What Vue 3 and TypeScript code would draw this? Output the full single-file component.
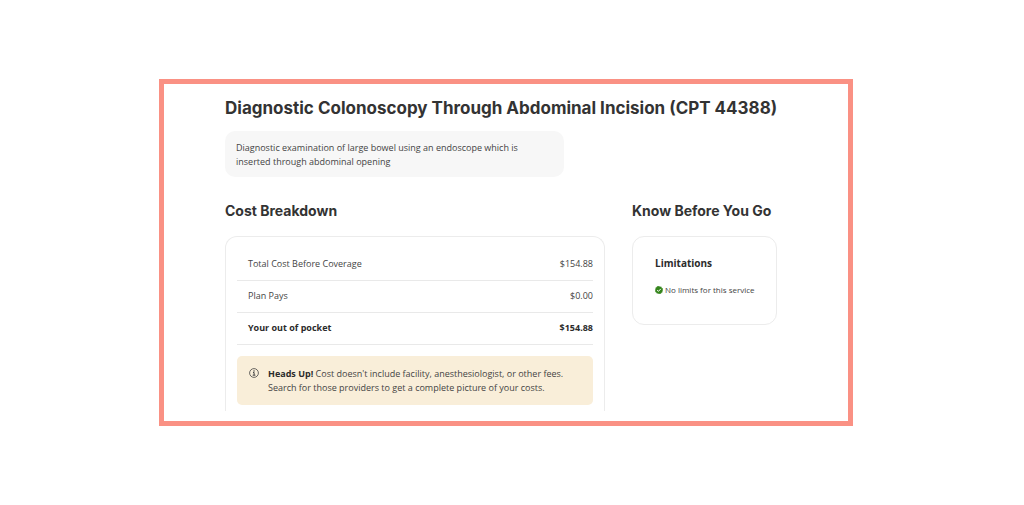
<script setup lang="ts">
interface CostRow {
  label: string
  amount: string
  total?: boolean
}

const costs: CostRow[] = [
  { label: 'Total Cost Before Coverage', amount: '$154.88' },
  { label: 'Plan Pays', amount: '$0.00' },
  { label: 'Your out of pocket', amount: '$154.88', total: true },
]
</script>

<template>
  <div class="page">
    <main class="frame">
      <h1 class="title">Diagnostic Colonoscopy Through Abdominal Incision (CPT 44388)</h1>
      <p class="summary">
        Diagnostic examination of large bowel using an endoscope which is inserted through abdominal opening
      </p>

      <div class="columns">
        <section>
          <h2 class="heading">Cost Breakdown</h2>
          <div class="card card-costs">
            <table class="costs">
              <tbody>
                <tr v-for="row in costs" :key="row.label" :class="{ total: row.total }">
                  <th scope="row">{{ row.label }}</th>
                  <td>{{ row.amount }}</td>
                </tr>
              </tbody>
            </table>
            <div class="notice">
              <svg class="info" viewBox="0 0 20 20" aria-hidden="true">
                <circle cx="10" cy="10" r="8.8" fill="none" stroke="currentColor" stroke-width="1.6" />
                <circle cx="10" cy="5.800" r="1.500" fill="currentColor" />
                <path d="M8 9h2.200v5.200M7.400 14.400h5.400" fill="none" stroke="currentColor" stroke-width="2" />
              </svg>
              <p>
                <strong>Heads Up!</strong> <span>Cost doesn't include facility, anesthesiologist, or other fees.</span>
                <br />
                <span>Search for those providers to get a complete picture of your costs.</span>
              </p>
            </div>
          </div>
        </section>

        <section>
          <h2 class="heading">Know Before You Go</h2>
          <div class="card card-limits">
            <h3>Limitations</h3>
            <p class="limit">
              <svg class="check" viewBox="0 0 24 24" aria-hidden="true">
                <path
                  d="M12 0l3 2 3.600-.4 1.400 3.300 3.300 1.500-.4 3.600L24 12l-1.700 3 .4 3.600-3.300 1.400-1.500 3.300-3.600-.4L12 24l-3-1.700-3.600.4L4 19.400.7 17.900l.4-3.600L0 12l1.700-3-.4-3.600L4.600 4 6.100.7l3.600.4z"
                  fill="#35851c"
                />
                <path d="M6.500 12.500l3.800 3.500 7.200-7.400" fill="none" stroke="#fff" stroke-width="3" />
              </svg>
              <span>No limits for this service</span>
            </p>
          </div>
        </section>
      </div>
    </main>
  </div>
</template>

<style>
body {
  margin: 0;
  background: #fff;
}
</style>

<style scoped>
.page {
  padding: 79px 171px 79px 159px;
  color: #444;
  font-family: "Open Sans", "Noto Sans", sans-serif;
  font-size: 9px;
  line-height: 14px;
}

h1,
h2,
h3,
p {
  margin: 0;
}

.frame {
  padding: 14px 0 10px 61px;
  border: 5px solid #fa9184;
}

.title,
.heading {
  color: #333;
  font-family: Inter, "Open Sans", sans-serif;
  font-weight: 700;
}

.title {
  font-size: 17px;
  line-height: 20px;
  white-space: nowrap;
}

.summary {
  box-sizing: border-box;
  max-width: 339px;
  margin-top: 13px;
  padding: 10px 32px 8px 11px;
  border-radius: 10px;
  background: #f7f7f7;
}

.columns {
  display: grid;
  grid-template-columns: 380fr 145fr;
  align-items: start;
  gap: 27px;
  margin: 26px 71px 0 0;
}

.heading {
  font-size: 14px;
  line-height: 16px;
  white-space: nowrap;
}

.card {
  margin-top: 17px;
  border: 1px solid #ececec;
  border-radius: 12px;
}

.card-costs {
  padding: 12px 11px 6px;
  border-bottom: 0;
  border-radius: 12px 12px 0 0;
}

.costs {
  width: 100%;
  border-collapse: collapse;
}

.costs th,
.costs td {
  height: 29px;
  padding: 0 0 2px;
  border-bottom: 1px solid #e9e9e9;
  font-weight: 400;
}

.costs th {
  padding-left: 11px;
  text-align: left;
}

.costs td {
  text-align: right;
}

.costs .total th,
.costs .total td {
  color: #2b2b2b;
  font-weight: 700;
}

.notice {
  display: flex;
  gap: 9px;
  margin-top: 11px;
  padding: 11px 20px 10px 12px;
  border-radius: 5px;
  background: #f9eed9;
}

.notice strong {
  color: #2b2b2b;
}

.info {
  flex: none;
  width: 10px;
  height: 10px;
  margin-top: 1px;
  color: #444;
}

.card-limits {
  padding: 19px 0 27px 22px;
}

.card-limits h3 {
  color: #2b2b2b;
  font-size: 10px;
  font-weight: 700;
  line-height: 14px;
}

.limit {
  display: flex;
  align-items: center;
  gap: 2px;
  margin-top: 13px;
  font-size: 8px;
  white-space: nowrap;
}

.check {
  flex: none;
  width: 8px;
  height: 8px;
}
</style>
